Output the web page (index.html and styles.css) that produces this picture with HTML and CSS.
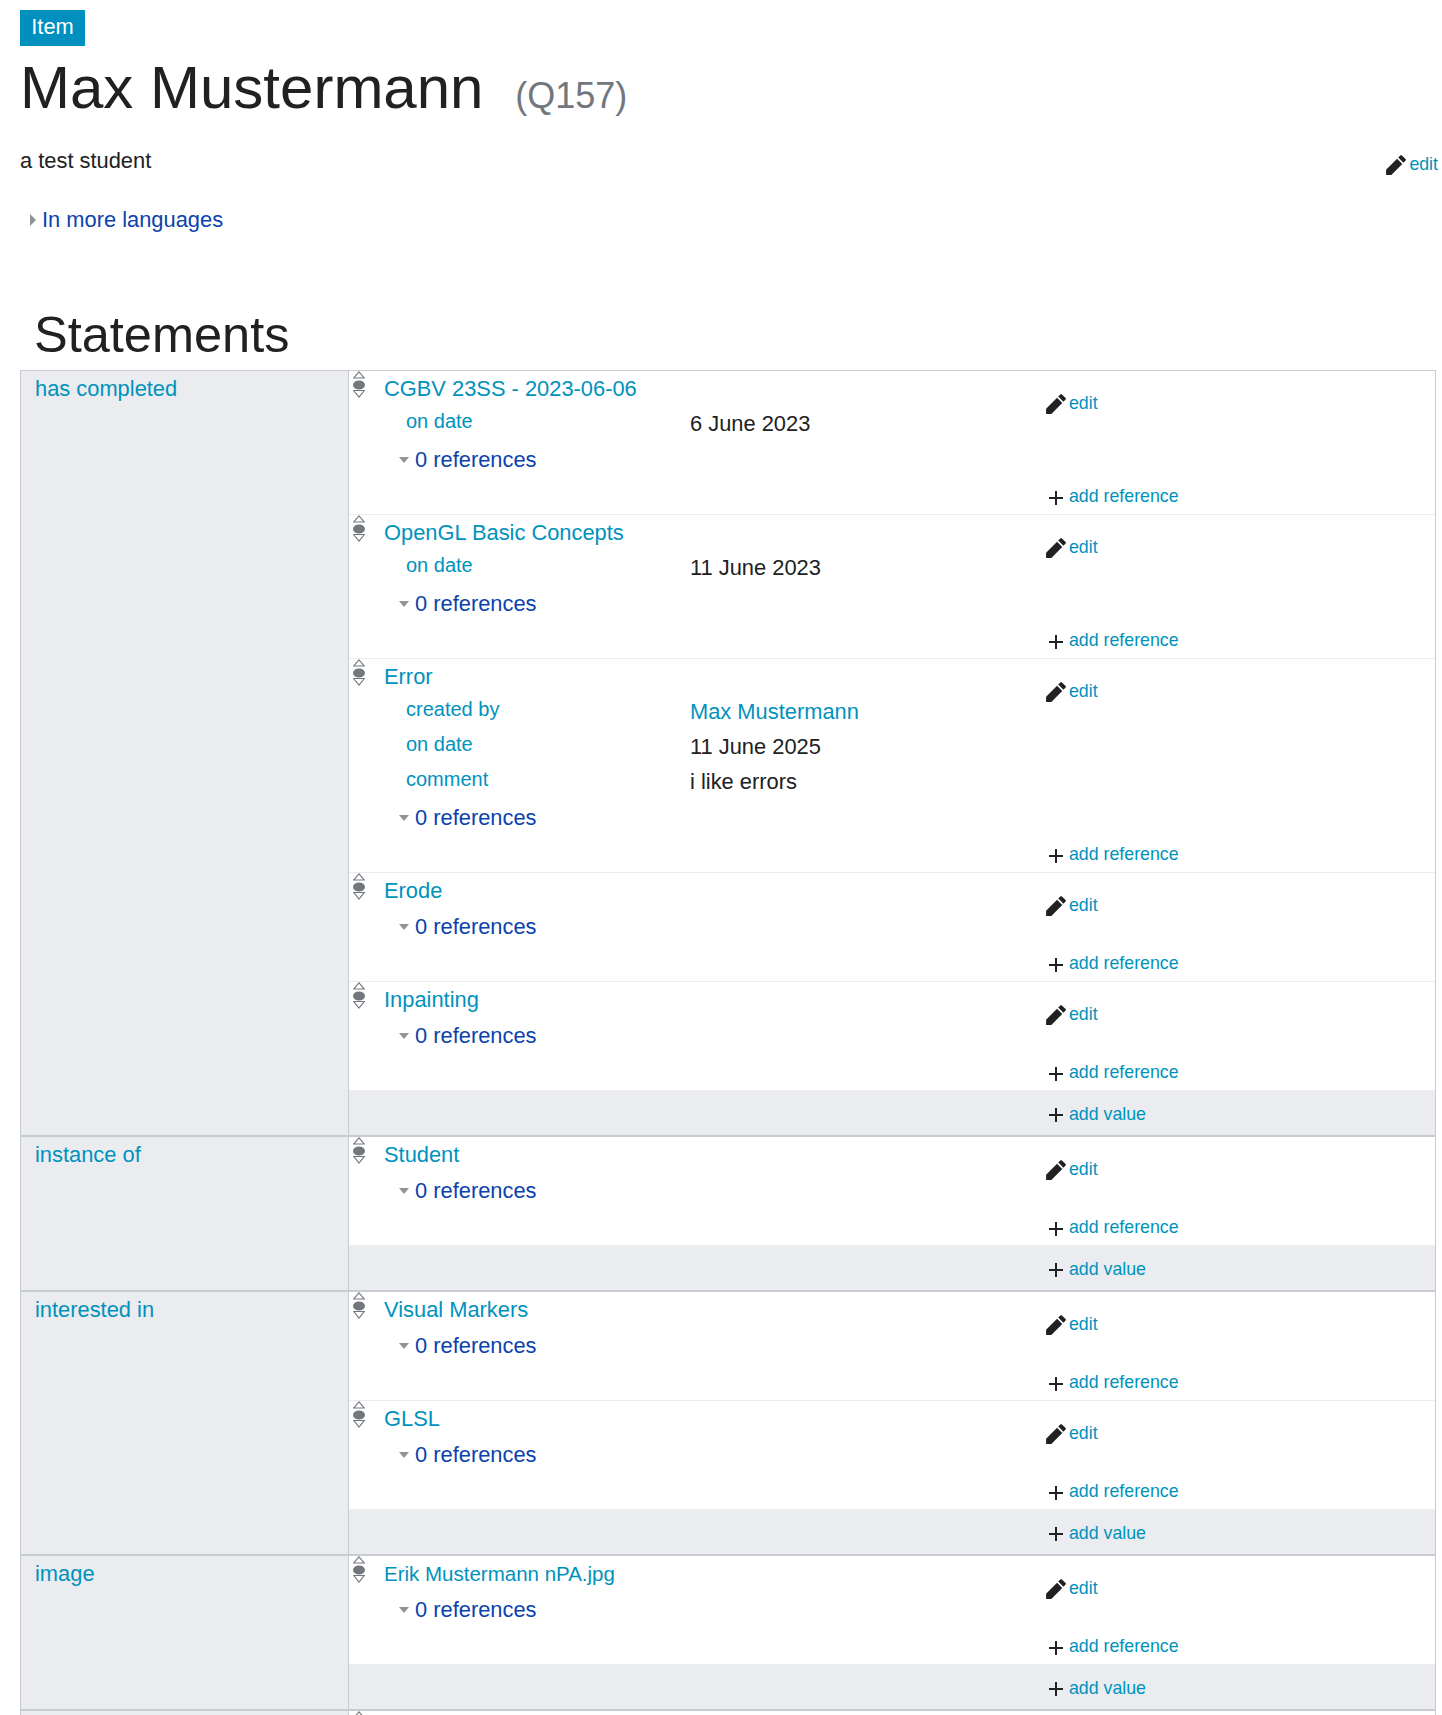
FILE: index.html
```html
<!DOCTYPE html>
<html lang="en">
<head>
    <meta charset="UTF-8">
    <title>Max Mustermann</title>
    <link rel="stylesheet" href="styles.css">
</head>
<body>
    <svg class="defs" width="0" height="0">
        <symbol id="pencil" viewBox="0 0 20 20"><path d="m16.77 8 1.94-2a1 1 0 0 0 0-1.41l-3.34-3.3a1 1 0 0 0-1.41 0L12 3.23zM1 14.25V19h4.75l9.96-9.96-4.75-4.75z"/></symbol>
        <symbol id="plus" viewBox="0 0 14 14"><path d="M6 0h2v6h6v2H8v6H6V8H0V6h6z"/></symbol>
        <symbol id="rank" viewBox="0 0 12 27"><path class="rank-line" d="M6 .8 11.2 7H.8zM.8 19.5h10.4L6 26z"/><ellipse class="rank-dot" cx="6" cy="14" rx="6" ry="4.6"/></symbol>
    </svg>

    <header class="entity-head">
        <span class="entity-type">Item</span>
        <h1 class="entity-title">Max Mustermann <span class="entity-id">(Q157)</span></h1>
        <div class="entity-desc">
            <span>a test student</span>
            <span class="toolbar-link desc-edit"><svg class="icon-pencil"><use href="#pencil"/></svg><a href="#">edit</a></span>
        </div>
        <div class="more-langs"><i class="arrow-right"></i><a href="#" class="dark-link">In more languages</a></div>
    </header>

    <h2 class="section-title">Statements</h2>

    <div class="statements">
        <!-- has completed -->
        <section class="group">
            <div class="prop"><a href="#">has completed</a></div>
            <div class="values">
                <div class="statement">
                    <svg class="rank"><use href="#rank"/></svg>
                    <div class="claim">
                        <div class="main-value"><a href="#">CGBV 23SS - 2023-06-06</a></div>
                        <div class="qualifier"><a class="q-label" href="#">on date</a><span class="q-value">6 June 2023</span></div>
                        <div class="refs"><i class="arrow-down"></i><a href="#" class="dark-link">0 references</a></div>
                    </div>
                    <div class="toolbar">
                        <span class="toolbar-link"><svg class="icon-pencil"><use href="#pencil"/></svg><a href="#">edit</a></span>
                        <span class="toolbar-link"><svg class="icon-plus"><use href="#plus"/></svg><a href="#">add reference</a></span>
                    </div>
                </div>
                <div class="statement">
                    <svg class="rank"><use href="#rank"/></svg>
                    <div class="claim">
                        <div class="main-value"><a href="#">OpenGL Basic Concepts</a></div>
                        <div class="qualifier"><a class="q-label" href="#">on date</a><span class="q-value">11 June 2023</span></div>
                        <div class="refs"><i class="arrow-down"></i><a href="#" class="dark-link">0 references</a></div>
                    </div>
                    <div class="toolbar">
                        <span class="toolbar-link"><svg class="icon-pencil"><use href="#pencil"/></svg><a href="#">edit</a></span>
                        <span class="toolbar-link"><svg class="icon-plus"><use href="#plus"/></svg><a href="#">add reference</a></span>
                    </div>
                </div>
                <div class="statement">
                    <svg class="rank"><use href="#rank"/></svg>
                    <div class="claim">
                        <div class="main-value"><a href="#">Error</a></div>
                        <div class="qualifier"><a class="q-label" href="#">created by</a><a class="q-value" href="#">Max Mustermann</a></div>
                        <div class="qualifier"><a class="q-label" href="#">on date</a><span class="q-value">11 June 2025</span></div>
                        <div class="qualifier"><a class="q-label" href="#">comment</a><span class="q-value">i like errors</span></div>
                        <div class="refs"><i class="arrow-down"></i><a href="#" class="dark-link">0 references</a></div>
                    </div>
                    <div class="toolbar">
                        <span class="toolbar-link"><svg class="icon-pencil"><use href="#pencil"/></svg><a href="#">edit</a></span>
                        <span class="toolbar-link"><svg class="icon-plus"><use href="#plus"/></svg><a href="#">add reference</a></span>
                    </div>
                </div>
                <div class="statement">
                    <svg class="rank"><use href="#rank"/></svg>
                    <div class="claim">
                        <div class="main-value"><a href="#">Erode</a></div>
                        <div class="refs"><i class="arrow-down"></i><a href="#" class="dark-link">0 references</a></div>
                    </div>
                    <div class="toolbar">
                        <span class="toolbar-link"><svg class="icon-pencil"><use href="#pencil"/></svg><a href="#">edit</a></span>
                        <span class="toolbar-link"><svg class="icon-plus"><use href="#plus"/></svg><a href="#">add reference</a></span>
                    </div>
                </div>
                <div class="statement">
                    <svg class="rank"><use href="#rank"/></svg>
                    <div class="claim">
                        <div class="main-value"><a href="#">Inpainting</a></div>
                        <div class="refs"><i class="arrow-down"></i><a href="#" class="dark-link">0 references</a></div>
                    </div>
                    <div class="toolbar">
                        <span class="toolbar-link"><svg class="icon-pencil"><use href="#pencil"/></svg><a href="#">edit</a></span>
                        <span class="toolbar-link"><svg class="icon-plus"><use href="#plus"/></svg><a href="#">add reference</a></span>
                    </div>
                </div>
                <div class="add-value"><span class="toolbar-link"><svg class="icon-plus"><use href="#plus"/></svg><a href="#">add value</a></span></div>
            </div>
        </section>

        <!-- instance of -->
        <section class="group">
            <div class="prop"><a href="#">instance of</a></div>
            <div class="values">
                <div class="statement">
                    <svg class="rank"><use href="#rank"/></svg>
                    <div class="claim">
                        <div class="main-value"><a href="#">Student</a></div>
                        <div class="refs"><i class="arrow-down"></i><a href="#" class="dark-link">0 references</a></div>
                    </div>
                    <div class="toolbar">
                        <span class="toolbar-link"><svg class="icon-pencil"><use href="#pencil"/></svg><a href="#">edit</a></span>
                        <span class="toolbar-link"><svg class="icon-plus"><use href="#plus"/></svg><a href="#">add reference</a></span>
                    </div>
                </div>
                <div class="add-value"><span class="toolbar-link"><svg class="icon-plus"><use href="#plus"/></svg><a href="#">add value</a></span></div>
            </div>
        </section>

        <!-- interested in -->
        <section class="group">
            <div class="prop"><a href="#">interested in</a></div>
            <div class="values">
                <div class="statement">
                    <svg class="rank"><use href="#rank"/></svg>
                    <div class="claim">
                        <div class="main-value"><a href="#">Visual Markers</a></div>
                        <div class="refs"><i class="arrow-down"></i><a href="#" class="dark-link">0 references</a></div>
                    </div>
                    <div class="toolbar">
                        <span class="toolbar-link"><svg class="icon-pencil"><use href="#pencil"/></svg><a href="#">edit</a></span>
                        <span class="toolbar-link"><svg class="icon-plus"><use href="#plus"/></svg><a href="#">add reference</a></span>
                    </div>
                </div>
                <div class="statement">
                    <svg class="rank"><use href="#rank"/></svg>
                    <div class="claim">
                        <div class="main-value"><a href="#">GLSL</a></div>
                        <div class="refs"><i class="arrow-down"></i><a href="#" class="dark-link">0 references</a></div>
                    </div>
                    <div class="toolbar">
                        <span class="toolbar-link"><svg class="icon-pencil"><use href="#pencil"/></svg><a href="#">edit</a></span>
                        <span class="toolbar-link"><svg class="icon-plus"><use href="#plus"/></svg><a href="#">add reference</a></span>
                    </div>
                </div>
                <div class="add-value"><span class="toolbar-link"><svg class="icon-plus"><use href="#plus"/></svg><a href="#">add value</a></span></div>
            </div>
        </section>

        <!-- image -->
        <section class="group">
            <div class="prop"><a href="#">image</a></div>
            <div class="values">
                <div class="statement">
                    <svg class="rank"><use href="#rank"/></svg>
                    <div class="claim">
                        <div class="main-value file-value"><a href="#">Erik Mustermann nPA.jpg</a></div>
                        <div class="refs"><i class="arrow-down"></i><a href="#" class="dark-link">0 references</a></div>
                    </div>
                    <div class="toolbar">
                        <span class="toolbar-link"><svg class="icon-pencil"><use href="#pencil"/></svg><a href="#">edit</a></span>
                        <span class="toolbar-link"><svg class="icon-plus"><use href="#plus"/></svg><a href="#">add reference</a></span>
                    </div>
                </div>
                <div class="add-value"><span class="toolbar-link"><svg class="icon-plus"><use href="#plus"/></svg><a href="#">add value</a></span></div>
            </div>
        </section>

        <!-- next group runs off the bottom of the window -->
        <section class="group group-cut">
            <div class="prop"></div>
            <div class="values">
                <svg class="rank"><use href="#rank"/></svg>
            </div>
        </section>
    </div>
</body>
</html>
```

FILE: styles.css
```css
html, body {
    height: 100%;
    overflow: hidden;
}
body {
    margin: 0;
    font-family: "Liberation Sans", Arial, sans-serif;
    font-size: 21.875px;
    color: #202122;
    background-color: #fff;
}
a {
    color: #0092bd;
    text-decoration: none;
}
a.dark-link {
    color: #0a42ae;
}
.defs {
    display: block;
    height: 0;
}

/* header */
.entity-head {
    padding: 10px 0 0 20px;
}
.entity-type {
    display: block;
    width: 65px;
    height: 36px;
    line-height: 33px;
    text-align: center;
    color: #fff;
    background-color: #0090bf;
}
.entity-title {
    margin: 7px 0 0;
    font-size: 60px;
    font-weight: normal;
    line-height: 70px;
    white-space: pre-wrap;
}
.entity-id {
    margin-left: 15px;
    font-size: 36px;
    color: #72777d;
}
.entity-desc {
    display: flex;
    justify-content: space-between;
    margin-top: 13px;
    padding-right: 4px;
    line-height: 34px;
}
.desc-edit {
    margin-top: 8px;
}
.more-langs {
    display: flex;
    align-items: center;
    margin-top: 25px;
    padding-left: 10px;
    line-height: 34px;
}
.arrow-right {
    width: 0;
    height: 0;
    margin-right: 6px;
    border-left: 6px solid #8f9399;
    border-top: 6px solid transparent;
    border-bottom: 6px solid transparent;
}
.section-title {
    margin: 68px 0 0 34px;
    font-size: 50.5px;
    font-weight: normal;
    line-height: 60px;
}

/* statement table */
.statements {
    margin: 5px 6px 0 20px;
}
.group {
    display: flex;
    border-left: 1px solid #c8ccd1;
    border-right: 1px solid #c8ccd1;
    border-top: 2px solid #c8ccd1;
}
.group:first-child {
    border-top-width: 1px;
}
.group-cut {
    height: 4px;
    overflow: hidden;
}
.prop {
    flex: 0 0 328px;
    box-sizing: border-box;
    padding-left: 14px;
    line-height: 36px;
    background-color: #eaecf0;
    border-right: 1px solid #c8ccd1;
}
.values {
    flex: 1;
    min-width: 0;
}
.statement {
    display: flex;
    border-bottom: 1px solid #eaecf0;
}
.statement:nth-last-child(2) {
    border-bottom: none;
}
.rank {
    flex: 0 0 12px;
    display: block;
    width: 12px;
    height: 27px;
    margin: 0 19px 0 4px;
}
.rank-line {
    fill: #fff;
    stroke: #72777d;
    stroke-width: 1.1;
}
.rank-dot {
    fill: #72777d;
}
.claim {
    flex: 0 0 662px;
    padding-bottom: 37px;
}
.main-value {
    height: 35px;
    line-height: 36px;
}
.file-value {
    font-size: 20.5px;
}
.qualifier {
    display: flex;
    height: 35px;
    padding-left: 22px;
    line-height: 35px;
}
.q-label {
    flex: 0 0 284px;
    font-size: 20px;
    line-height: 30px;
}
.refs {
    display: flex;
    align-items: center;
    height: 35px;
    margin-top: 1px;
    padding-left: 15px;
}
.arrow-down {
    width: 0;
    height: 0;
    margin-right: 6px;
    border-top: 6px solid #8f9399;
    border-left: 5px solid transparent;
    border-right: 5px solid transparent;
}
.toolbar {
    flex: 1;
    display: flex;
    flex-direction: column;
    justify-content: space-between;
    padding: 20px 0 6px;
}
.toolbar-link {
    display: flex;
    align-items: center;
    height: 24px;
    font-size: 17.75px;
    line-height: 24px;
}
.icon-pencil {
    width: 22px;
    height: 22px;
    margin: 2px 2px 0 -1px;
    fill: #202122;
}
.icon-plus {
    width: 14px;
    height: 14px;
    margin: 3px 6px 0 3px;
    fill: #202122;
}
.add-value {
    height: 45px;
    padding-top: 12px;
    box-sizing: border-box;
    padding-left: 697px;
    background-color: #eaecf0;
}
.add-value .icon-plus {
    margin-top: 1px;
}
```
